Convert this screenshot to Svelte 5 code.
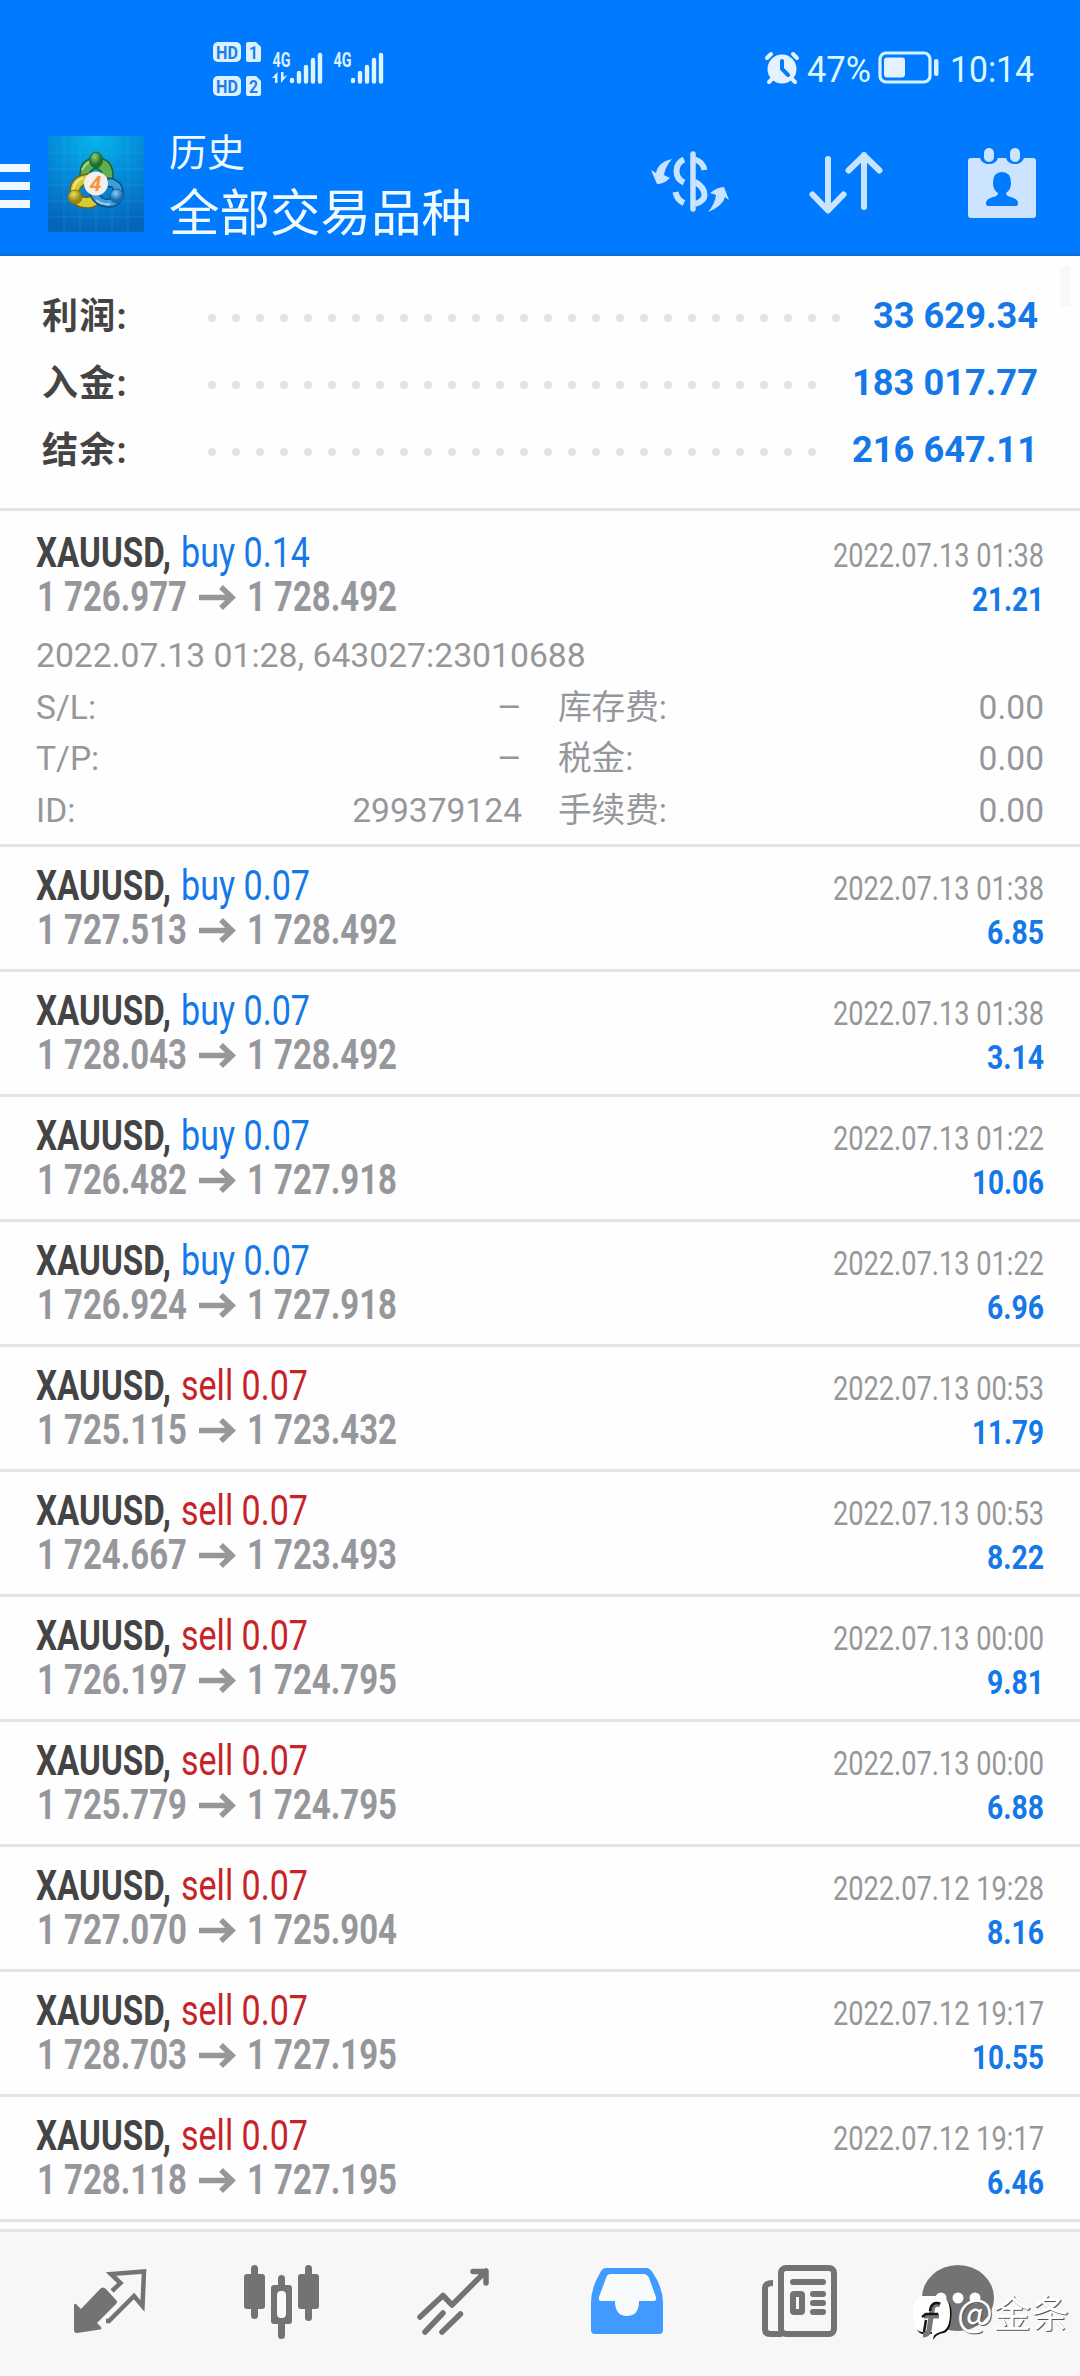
<script>
  const summary = [
    { label: '利润:', value: '33 629.34', dots: 27 },
    { label: '入金:', value: '183 017.77', dots: 26 },
    { label: '结余:', value: '216 647.11', dots: 26 },
  ];
  const first = { side: 'buy', lot: '0.14', from: '1 726.977', to: '1 728.492', time: '2022.07.13 01:38', profit: '21.21' };
  const details = [
    ['S/L:', '–', '库存费:', '0.00'],
    ['T/P:', '–', '税金:', '0.00'],
    ['ID:', '299379124', '手续费:', '0.00'],
  ];
  const rest = [
    ['buy', '1 727.513', '1 728.492', '2022.07.13 01:38', '6.85'],
    ['buy', '1 728.043', '1 728.492', '2022.07.13 01:38', '3.14'],
    ['buy', '1 726.482', '1 727.918', '2022.07.13 01:22', '10.06'],
    ['buy', '1 726.924', '1 727.918', '2022.07.13 01:22', '6.96'],
    ['sell', '1 725.115', '1 723.432', '2022.07.13 00:53', '11.79'],
    ['sell', '1 724.667', '1 723.493', '2022.07.13 00:53', '8.22'],
    ['sell', '1 726.197', '1 724.795', '2022.07.13 00:00', '9.81'],
    ['sell', '1 725.779', '1 724.795', '2022.07.13 00:00', '6.88'],
    ['sell', '1 727.070', '1 725.904', '2022.07.12 19:28', '8.16'],
    ['sell', '1 728.703', '1 727.195', '2022.07.12 19:17', '10.55'],
    ['sell', '1 728.118', '1 727.195', '2022.07.12 19:17', '6.46'],
  ].map(([side, from, to, time, profit]) => ({ side, lot: '0.07', from, to, time, profit }));
</script>

{#snippet fit(text, width, size, weight, fill)}
  <svg {width} height="44" viewBox="0 0 {width} 44">
    <text x="0" y="36" font-size={size} font-weight={weight} {fill} textLength={width} lengthAdjust="spacingAndGlyphs">{text}</text>
  </svg>
{/snippet}

{#snippet deal(d)}
  <div class="deal">
    <div class="left">
      <div class="line">
        {@render fit('XAUUSD,', 135, 42, 700, '#444')}
        {@render fit(d.side + ' ' + d.lot, d.side === 'buy' ? 129 : 127, 42, 400, d.side === 'buy' ? '#1478e8' : '#c62428')}
      </div>
      <div class="line prices">
        {@render fit(d.from, 150, 42, 700, '#96979b')}
        <svg class="arrow" width="36" height="44" viewBox="0 0 36 44"><path d="M0 22.500H32M22 12L33 22.500L22 33" /></svg>
        {@render fit(d.to, 150, 42, 700, '#96979b')}
      </div>
    </div>
    <div class="right">
      {@render fit(d.time, 211, 34, 400, '#96979b')}
      {@render fit(d.profit, d.profit.length === 5 ? 72 : 57, 34, 700, '#1478e8')}
    </div>
  </div>
{/snippet}

<div class="screen">
  <header>
    <div class="status">
      <svg width="180" height="60" viewBox="0 0 180 60">
        <g fill="#dcf1ff">
          <rect x="1" y="2" width="28" height="20" rx="5" /><path d="M36 2H44L49 7V20Q49 22 47 22H36Q34 22 34 20V4Q34 2 36 2Z" />
          <rect x="1" y="36" width="28" height="20" rx="5" /><path d="M36 36H44L49 41V54Q49 56 47 56H36Q34 56 34 54V38Q34 36 36 36Z" />
          <text class="tiny" x="60.500" y="26.500" font-size="20" textLength="18" lengthAdjust="spacingAndGlyphs">4G</text>
          <text class="tiny" x="121.500" y="26.500" font-size="20" textLength="18" lengthAdjust="spacingAndGlyphs">4G</text>
          <path d="M60 38L65.500 32V43H63V38ZM69 32H71.500V37L75.500 35L69 43Z" />
        </g>
        <g fill="#1a7fe8" class="hd">
          <text x="4" y="18.500" font-size="18" textLength="22" lengthAdjust="spacingAndGlyphs">HD</text><text x="37" y="19" font-size="18" textLength="9" lengthAdjust="spacingAndGlyphs">1</text>
          <text x="4" y="52.500" font-size="18" textLength="22" lengthAdjust="spacingAndGlyphs">HD</text><text x="37" y="53" font-size="18" textLength="9" lengthAdjust="spacingAndGlyphs">2</text>
        </g>
        <path d="M80 40V41M87 33V41.500M94 27V41.500M101 20V41.500M108 15V41.500M141 40V41M148 33V41.500M155 27V41.500M162 20V41.500M169 15V41.500" stroke="#dcf5ff" stroke-width="4.400" stroke-linecap="round" />
      </svg>
      <div class="status-right">
        <svg width="34" height="34" viewBox="0 0 34 34">
          <circle cx="17" cy="18" r="14.500" fill="#e4f2ff" />
          <path d="M2 7L6 3M32 7L28 3M4 31L7 28M30 31L27 28" stroke="#e4f2ff" stroke-width="4" stroke-linecap="round" />
          <path d="M17 10V18L23 24" stroke="#007aff" stroke-width="4" stroke-linecap="round" fill="none" />
        </svg>
        <svg class="pct" width="66" height="44" viewBox="0 0 66 44"><text x="0" y="36" font-size="36" fill="#dcf8ff" textLength="64" lengthAdjust="spacingAndGlyphs">47%</text></svg>
        <svg class="battery" width="62" height="34" viewBox="0 0 62 34">
          <rect x="2" y="2" width="50" height="29" rx="6" fill="none" stroke="#d4f2ff" stroke-width="3.200" />
          <rect x="6" y="6.500" width="21" height="20" rx="3" fill="#e4f2ff" /><rect x="56" y="8" width="4.500" height="17" rx="2" fill="#d4f2ff" />
        </svg>
        <svg class="clock" width="84" height="44" viewBox="0 0 84 44"><text x="0" y="36" font-size="36" fill="#dcf8ff" textLength="84" lengthAdjust="spacingAndGlyphs">10:14</text></svg>
      </div>
    </div>
    <div class="bar">
      <div class="burger"><i></i><i></i><i></i></div>
      <svg class="logo" width="96" height="96" viewBox="0 0 96 96">
        <defs>
          <radialGradient id="sky" cx="50%" cy="0%" r="100%"><stop offset="0" stop-color="#04b6ea" /><stop offset=".5" stop-color="#058ad8" /><stop offset="1" stop-color="#0565ba" /></radialGradient>
          <radialGradient id="gr" cx="40%" cy="30%"><stop offset="0" stop-color="#8fcf7c" /><stop offset="1" stop-color="#1f7030" /></radialGradient>
          <radialGradient id="ye" cx="40%" cy="30%"><stop offset="0" stop-color="#e9e06a" /><stop offset="1" stop-color="#978512" /></radialGradient>
          <radialGradient id="bl" cx="40%" cy="30%"><stop offset="0" stop-color="#87d1f8" /><stop offset="1" stop-color="#176bb0" /></radialGradient>
        </defs>
        <rect width="96" height="96" fill="url(#sky)" />
        <path d="M0 17H96M0 33H96M0 49H96M0 65H96M0 81H96M16 0V96M32 0V96M48 0V96M64 0V96M80 0V96" stroke="#55c6f2" stroke-opacity=".18" />
        <path d="M32 40Q32 22 48 22Q65 22 65 40Q65 46 61 51L54 46Q57 36 48 32Q41 34 40 42L34 44Z" fill="#5fae50" stroke="#1d6433" stroke-width="1.500" />
        <path d="M40 38Q22 40 22 56Q22 72 40 72Q46 72 50 68L44 60Q34 64 31 56Q32 48 42 47Z" fill="#d6cb36" stroke="#6d6614" stroke-width="1.500" />
        <path d="M60 42Q75 44 75 57Q74 71 60 71Q46 70 42 58L50 56Q54 65 62 63Q69 59 64 51L58 50Z" fill="#3d9edb" stroke="#0d4f85" stroke-width="1.500" />
        <path d="M34 34Q38 25 47 25M25 55Q26 45 35 42M48 64Q54 69 62 68" stroke="#fff" stroke-opacity=".5" stroke-width="2" fill="none" />
        <ellipse cx="48" cy="24" rx="6.500" ry="8" fill="url(#gr)" stroke="#1d6433" /><circle cx="27" cy="61" r="7" fill="url(#ye)" stroke="#85770f" /><circle cx="69" cy="60" r="7" fill="url(#bl)" stroke="#1460a0" />
        <circle cx="48" cy="47.500" r="12" fill="#f3f0ec" />
        <text class="four" x="47.500" y="55" text-anchor="middle" font-size="21" fill="#f2953f">4</text>
      </svg>
      <div class="titles"><div class="t1">历史</div><div class="t2">全部交易品种</div></div>
      <svg class="i1" width="80" height="64" viewBox="0 0 80 64">
        <g fill="none" stroke="#c8e4ff">
          <path d="M43 4V59" stroke-width="5.500" stroke-linecap="round" />
          <path d="M34 9.500Q26.500 13 26.500 21Q26.500 29 34 32.500M45 9.500Q53 12 54.500 20M45 32Q54.500 37 54.500 45Q54.500 51 45 54M34 53Q27 50 25.500 42" stroke-width="6" />
        </g>
        <path d="M22 9Q8 12 6 23L1 20L7 34Q14 34 20 28L14 25Q15 17 22 9ZM58 62Q73 56 75 47L79 50L74 37Q67 37 60 43L66 45Q65 54 58 62Z" fill="#c8e4ff" />
      </svg>
      <svg class="i2" width="74" height="64" viewBox="0 0 74 64"><path d="M19 8V59M3.500 43.500L19 59.500L34.500 43.500M55 56V4M39.500 19.500L55 4.500L70.500 19.500" fill="none" stroke="#c8e4ff" stroke-width="6" stroke-linecap="round" stroke-linejoin="round" /></svg>
      <svg class="i3" width="68" height="72" viewBox="0 0 68 72">
        <path d="M3 11H12Q14 17 21 17Q28 17 30 11H38Q40 17 47 17Q54 17 56 11H65Q68 11 68 14V68Q68 71 65 71H3Q0 71 0 68V14Q0 11 3 11Z" fill="#cce4ff" />
        <rect x="16" y="1" width="10" height="14" rx="5" fill="#cce4ff" /><rect x="42" y="1" width="10" height="14" rx="5" fill="#cce4ff" />
        <path d="M34 25Q43 25 43 36Q43 43 38 46Q38 49 43 50Q50 52 50 56Q50 59 48 59H20Q18 59 18 56Q18 52 25 50Q30 49 30 46Q25 43 25 36Q25 25 34 25Z" fill="#007aff" />
      </svg>
    </div>
  </header>

  <section class="summary">
    {#each summary as s}
      <div class="sum">
        <span class="label">{s.label}</span>
        <div class="dots">{#each Array(s.dots) as _}<i></i>{/each}</div>
        <div class="val">{@render fit(s.value, s.dots === 27 ? 165 : 186, 37.5, 700, '#1478e8')}</div>
      </div>
    {/each}
    <div class="thumb"></div>
  </section>

  <main>
    <article class="open">
      {@render deal(first)}
      <div class="meta">2022.07.13 01:28, 643027:23010688</div>
      {#each details as [a, b, c, e]}
        <div class="drow"><span>{a}</span><span class="b" class:dash={b === '–'}>{b}</span><span class="c">{c}</span><span class="e">{e}</span></div>
      {/each}
    </article>
    {#each rest as d}<article>{@render deal(d)}</article>{/each}
    <article class="next"></article>
  </main>

  <nav>
    <svg width="76" height="80" viewBox="0 0 76 80">
      <path d="M2 42Q3 40 4 41L9 46L28 26Q31 23 34 26L44 37Q46 39 44 41L25 60L29 64Q30 66 28 66.500L5 70Q2 70 2 67Z" fill="#737373" />
      <path d="M40 28L48.500 20L39 11L72 8.500L70.500 43L62 33L37 58H34" fill="none" stroke="#737373" stroke-width="4.500" />
    </svg>
    <svg width="76" height="80" viewBox="0 0 76 80">
      <g fill="#737373"><rect x="1" y="11" width="21" height="35" rx="3" /><rect x="8" y="2" width="7" height="54" rx="3.500" /><rect x="55" y="11" width="21" height="35" rx="3" /><rect x="62" y="2" width="7" height="56" rx="3.500" /><rect x="28" y="22" width="21" height="39" rx="3" /><rect x="35" y="12" width="7" height="64" rx="3.500" /></g>
      <rect x="34" y="28" width="9" height="27" rx="4" fill="#f9f9f9" />
    </svg>
    <svg width="76" height="80" viewBox="0 0 76 80"><path d="M4 54L27 32.500L36 42L70 8M57 8.500H70V20M9 69L27 50M26 69L44.500 51" fill="none" stroke="#737373" stroke-width="5.500" stroke-linecap="round" stroke-linejoin="round" /></svg>
    <svg width="76" height="80" viewBox="0 0 76 80">
      <path d="M17 5H57Q61 5 64 10Q74 25 74 40V67Q74 71 70 71H6Q2 71 2 67V40Q2 25 11 10Q13 5 17 5Z" fill="#419aff" />
      <path d="M22 11H55Q58 11 60 15L67 34Q68 38 64 38H50Q50 53 38 53Q26 53 26 38H12Q9 38 10 34L17 15Q18 11 22 11Z" fill="#f9fafb" />
    </svg>
    <svg width="76" height="80" viewBox="0 0 76 80">
      <rect x="19" y="5" width="53" height="66" rx="5" fill="none" stroke="#737373" stroke-width="6" />
      <path d="M11 20Q3 20 3 25V66Q3 71 8 71H20" fill="none" stroke="#737373" stroke-width="6" />
      <path d="M31 19H61M51 31H61M51 40H61M51 49H61" stroke="#737373" stroke-width="6" stroke-linecap="round" /><rect x="31" y="31" width="9" height="18" rx="1" fill="#f7f7f7" stroke="#737373" stroke-width="6" />
    </svg>
    <svg width="76" height="80" viewBox="0 0 76 80"><ellipse cx="37" cy="35" rx="36" ry="33" fill="#737373" /><circle cx="20" cy="35" r="5.500" fill="#fff" /><circle cx="37" cy="35" r="5.500" fill="#fff" /><circle cx="54" cy="35" r="5.500" fill="#fff" /></svg>
  </nav>
  <div class="mark">
    <svg width="38" height="46" viewBox="0 0 38 46">
      <path d="M12 3H30Q39 5 38.500 18Q38 35 31 37Q23 38 20 44L21 38H9Q2 36 2 20Z" fill="#111" />
      <path d="M9 0H27Q37 2 37 17Q37 33 29 35.500Q22 37 18.500 42L19 36H9Q0 35 0 18Q0 2 9 0Z" fill="#fff" />
      <path d="M27 9Q20 6 19 15L16 34Q15 39 10 39M11 20H26" fill="none" stroke="#777" stroke-width="5" />
      <path d="M27 7.500Q18 5 17 15M9 21L13 18H25M13 24L11 36" fill="none" stroke="#151515" stroke-width="2.500" />
    </svg>
    <span>@金条</span>
  </div>
</div>

<style>
  :global(body) { background: #fff; }
  .screen { width: 1080px; height: 2376px; position: relative; overflow: hidden; display: flex; flex-direction: column; font-family: Roboto, "Noto Sans CJK SC", sans-serif; background: #fefefe; }
  svg { display: block; flex: none; overflow: visible; }
  header { height: 256px; box-sizing: border-box; background: #007aff; border-bottom: 3px solid #0a6fdc; flex: none; }
  .status { height: 120px; box-sizing: border-box; padding: 40px 46px 0 212px; display: flex; justify-content: space-between; }
  .tiny, .hd { font-weight: 700; }
  .status-right { display: flex; align-items: flex-start; padding-top: 11px; }
  .pct { margin: -5px 0 0 8px; }
  .battery { margin-left: 5px; }
  .clock { margin: -5px 0 0 10px; }
  .bar { height: 133px; display: flex; align-items: flex-start; }
  .burger { width: 30px; padding-top: 44px; display: flex; flex-direction: column; gap: 10px; }
  .burger i { height: 8px; background: #f0f8ff; }
  .logo { margin: 16px 0 0 18px; }
  .four { font-weight: 700; font-style: italic; }
  .titles { margin-left: 25px; width: 469px; color: #f0fbff; }
  .t1 { font-size: 38px; line-height: 60px; margin-top: 3px; }
  .t2 { font-size: 50.500px; line-height: 60px; padding-top: 1px; }
  .i1 { margin: 30px 0 0 12px; }
  .i2 { margin: 31px 0 0 79px; }
  .i3 { margin: 27px 0 0 85px; }
  .summary { height: 252px; box-sizing: border-box; padding: 25px 42px 0; position: relative; flex: none; }
  .sum { height: 67px; display: flex; align-items: center; }
  .label { width: 166px; font-size: 36px; font-weight: 700; color: #444; letter-spacing: 1.300px; line-height: 50px; padding-top: 5px; }
  .dots { display: flex; gap: 16px; padding-top: 6px; }
  .dots i { width: 8px; height: 8px; border-radius: 50%; background: #e3e3e3; }
  .val { margin-left: auto; padding-bottom: 2px; }
  .thumb { position: absolute; right: 10px; top: 10px; width: 10px; height: 40px; background: #f8f8f8; }
  main { flex: 1; min-height: 0; overflow: hidden; }
  article { height: 125px; box-sizing: border-box; border-top: 3px solid #e4e4e4; padding: 17px 36px 0; }
  article.open { height: 336px; padding-top: 20px; }
  article.next { height: 10px; padding: 0; }
  .deal { display: flex; justify-content: space-between; height: 90px; }
  .line { display: flex; gap: 10px; }
  .prices { gap: 12px; padding-left: 1px; }
  .left { display: flex; flex-direction: column; }
  .right { display: flex; flex-direction: column; align-items: flex-end; }
  .arrow path { fill: none; stroke: #96979b; stroke-width: 5.500px; }
  .meta { font-size: 33.700px; color: #96979b; height: 60.500px; line-height: 69px; }
  .drow { display: grid; grid-template-columns: 200px 286px 200px 1fr; font-size: 33.600px; line-height: 51.600px; height: 51.600px; color: #96979b; }
  .b, .e { text-align: right; }
  .dash { transform: scaleX(1.15); transform-origin: right; }
  .c { padding-left: 36px; }
  nav { height: 147px; box-sizing: border-box; border-top: 3px solid #e4e4e4; background: #f7f7f7; flex: none; display: grid; grid-template-columns: 171px 173px 172.500px 173.500px 159px 76px; padding: 31px 0 0 72px; }
  .mark { position: absolute; left: 913px; top: 2296px; display: flex; color: #fff; font-family: "Noto Sans CJK SC", sans-serif; font-size: 38px; font-weight: 400; line-height: 30px; text-shadow: 1px 1px 0 #555; gap: 6px; }
</style>
